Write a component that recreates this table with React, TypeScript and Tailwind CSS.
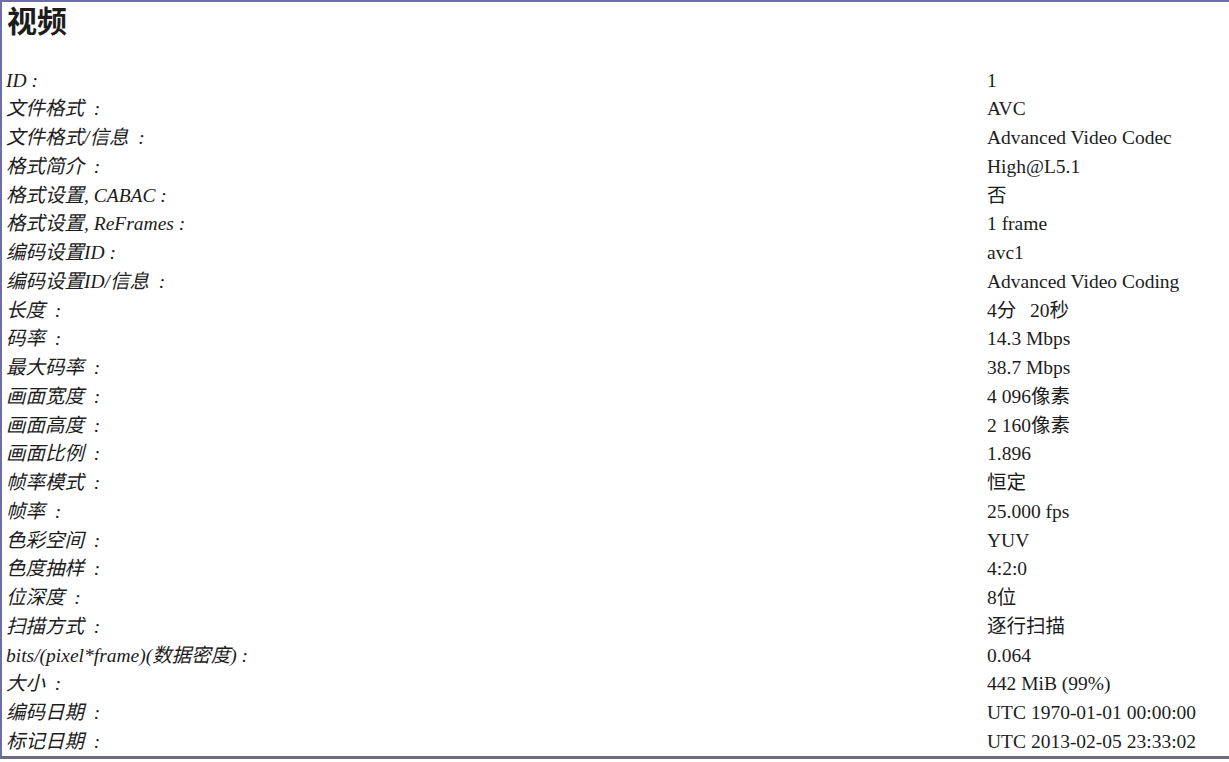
const rows: [string, string][] = [
  ['ID :', '1'],
  ['文件格式\u2002:', 'AVC'],
  ['文件格式/信息\u2002:', 'Advanced Video Codec'],
  ['格式简介\u2002:', 'High@L5.1'],
  ['格式设置, CABAC :', '否'],
  ['格式设置, ReFrames :', '1 frame'],
  ['编码设置ID :', 'avc1'],
  ['编码设置ID/信息\u2002:', 'Advanced Video Coding'],
  ['长度\u2002:', '4分\u2002\u200920秒'],
  ['码率\u2002:', '14.3 Mbps'],
  ['最大码率\u2002:', '38.7 Mbps'],
  ['画面宽度\u2002:', '4 096像素'],
  ['画面高度\u2002:', '2 160像素'],
  ['画面比例\u2002:', '1.896'],
  ['帧率模式\u2002:', '恒定'],
  ['帧率\u2002:', '25.000 fps'],
  ['色彩空间\u2002:', 'YUV'],
  ['色度抽样\u2002:', '4:2:0'],
  ['位深度\u2002:', '8位'],
  ['扫描方式\u2002:', '逐行扫描'],
  ['bits/(pixel*frame)(数据密度) :', '0.064'],
  ['大小\u2002:', '442 MiB (99%)'],
  ['编码日期\u2002:', 'UTC 1970-01-01 00:00:00'],
  ['标记日期\u2002:', 'UTC 2013-02-05 23:33:02'],
]

export default function App() {
  return (
    <div className="w-[1229px] h-[762px] bg-white text-[#1c1c1c] font-['Liberation_Serif','Noto_Sans_CJK_SC',serif]">
      <div className="h-[759px] border-t-2 border-l-2 border-b-[3px] border-t-[#6b6ea8] border-l-[#6b6ea8] border-b-[#6d6d7c]">
        <h1 className="h-[64.6px] pl-[5px] pt-[2px] text-[30px] leading-[36px] font-bold">视频</h1>
        <div className="grid grid-cols-[981px_1fr] pl-[4px]">
          {rows.map(([label, value]) => (
            <div key={label} className="contents">
              <div className="h-[28.75px] leading-[28.75px] text-[19.5px] italic whitespace-pre">{label}</div>
              <div className="h-[28.75px] leading-[28.75px] text-[19.5px] whitespace-pre">{value}</div>
            </div>
          ))}
        </div>
      </div>
    </div>
  )
}
